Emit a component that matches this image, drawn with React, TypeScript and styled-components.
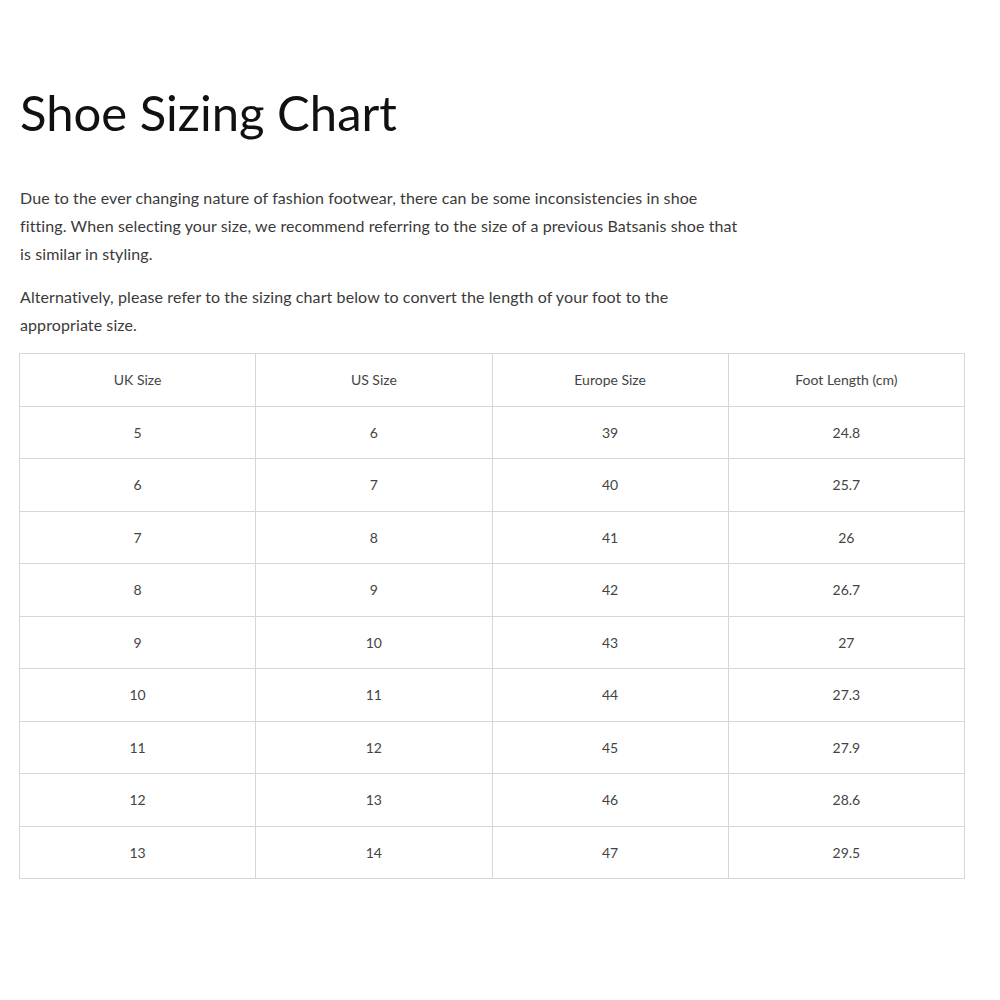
import React from "react";
import styled, { createGlobalStyle } from "styled-components";

const Global = createGlobalStyle`
  html, body { margin: 0; padding: 0; background: #fff; }
  body { font-family: Lato, "Open Sans", sans-serif; color: #3a3a3a; }
`;

const Page = styled.main`
  padding: 76px 36px 40px 19px;
`;

const Title = styled.h1`
  margin: 0 0 0 1px;
  font-family: Lato, sans-serif;
  font-weight: 400;
  font-size: 49px;
  line-height: 72px;
  color: #111;
  letter-spacing: 0px;
`;

const Intro = styled.div`
  margin-top: 36px;
  padding-left: 1px;
  max-width: 720px;
`;

const Para = styled.p`
  margin: 0 0 15px;
  font-size: 16px;
  line-height: 28px;
  letter-spacing: 0.1px;
  color: #3a3a3a;
  &:last-child { margin-bottom: 0; }
`;

const Table = styled.table`
  width: 946px;
  border-collapse: collapse;
  table-layout: fixed;
  margin-top: 14px;
  border: 1px solid #d6d6d6;
`;

const Cell = styled.td<{ $head?: boolean }>`
  border: 1px solid #d6d6d6;
  height: 51.5px;
  padding: 0;
  text-align: center;
  vertical-align: middle;
  font-size: 14px;
  color: #444;
  font-weight: 400;
`;

const rows: [string, string, string, string][] = [
  ["5", "6", "39", "24.8"],
  ["6", "7", "40", "25.7"],
  ["7", "8", "41", "26"],
  ["8", "9", "42", "26.7"],
  ["9", "10", "43", "27"],
  ["10", "11", "44", "27.3"],
  ["11", "12", "45", "27.9"],
  ["12", "13", "46", "28.6"],
  ["13", "14", "47", "29.5"],
];

export default function App() {
  return (
    <>
      <Global />
      <Page>
        <Title>Shoe Sizing Chart</Title>
        <Intro>
          <Para>
            Due to the ever changing nature of fashion footwear, there can be some inconsistencies in shoe
            fitting. When selecting your size, we recommend referring to the size of a previous Batsanis shoe that
            is similar in styling.
          </Para>
          <Para>
            Alternatively, please refer to the sizing chart below to convert the length of your foot to the
            appropriate size.
          </Para>
        </Intro>
        <Table>
          <tbody>
            <tr>
              <Cell $head>UK Size</Cell>
              <Cell $head>US Size</Cell>
              <Cell $head>Europe Size</Cell>
              <Cell $head>Foot Length (cm)</Cell>
            </tr>
            {rows.map((r) => (
              <tr key={r[0]}>
                {r.map((v, i) => (
                  <Cell key={i}>{v}</Cell>
                ))}
              </tr>
            ))}
          </tbody>
        </Table>
      </Page>
    </>
  );
}
